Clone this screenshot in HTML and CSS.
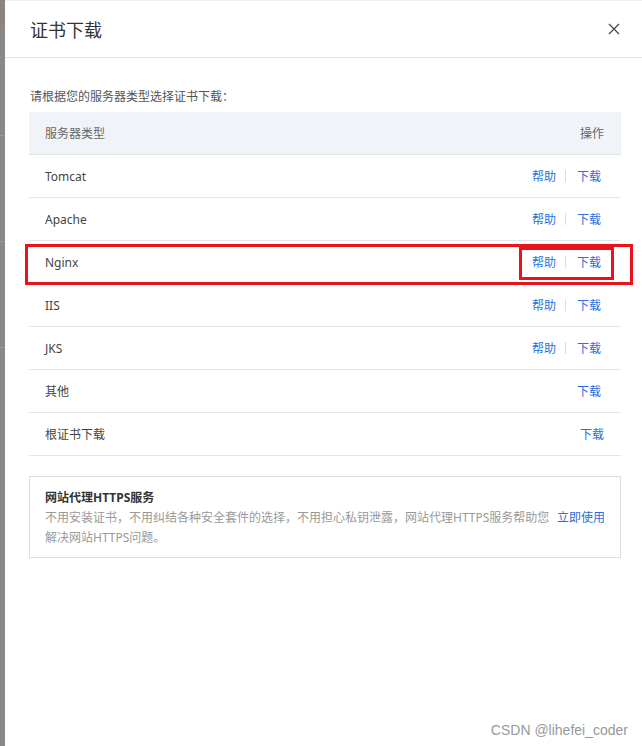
FILE: index.html
```html
<!DOCTYPE html>
<html lang="zh-CN">
<head>
  <meta charset="UTF-8" />
  <meta name="viewport" content="width=device-width, initial-scale=1.0"/>
  <title>证书下载</title>
  <link rel="stylesheet" href="styles.css">
</head>
<body>
  <div class="fundo">
    <div class="faixa topo"></div>
    <div class="faixa"></div>
    <div class="faixa"></div>
    <div class="faixa"></div>
    <div class="faixa resto"></div>
  </div>

  <div class="dialogo">
    <div class="cabecalho">
      <span class="titulo">证书下载</span>
      <span class="fechar">
        <svg width="12" height="12" viewBox="0 0 12 12"><path d="M1 1L11 11M11 1L1 11" stroke="#444" stroke-width="1.2" fill="none"/></svg>
      </span>
    </div>

    <div class="corpo">
      <p class="dica">请根据您的服务器类型选择证书下载：</p>

      <div class="tabela">
        <div class="linha cab">
          <span>服务器类型</span>
          <span>操作</span>
        </div>
        <div class="linha">
          <span>Tomcat</span>
          <span class="acoes"><a>帮助</a><i class="sep"></i><a>下载</a></span>
        </div>
        <div class="linha">
          <span>Apache</span>
          <span class="acoes"><a>帮助</a><i class="sep"></i><a>下载</a></span>
        </div>
        <div class="linha marcada">
          <span>Nginx</span>
          <span class="acoes caixa"><a>帮助</a><i class="sep"></i><a>下载</a></span>
        </div>
        <div class="linha">
          <span>IIS</span>
          <span class="acoes"><a>帮助</a><i class="sep"></i><a>下载</a></span>
        </div>
        <div class="linha">
          <span>JKS</span>
          <span class="acoes"><a>帮助</a><i class="sep"></i><a>下载</a></span>
        </div>
        <div class="linha">
          <span>其他</span>
          <span class="acoes"><a>下载</a></span>
        </div>
        <div class="linha">
          <span>根证书下载</span>
          <span><a>下载</a></span>
        </div>
      </div>

      <div class="servico">
        <div class="servico-titulo">网站代理HTTPS服务</div>
        <div class="servico-texto">
          <p>不用安装证书，不用纠结各种安全套件的选择，不用担心私钥泄露，网站代理HTTPS服务帮助您<br>解决网站HTTPS问题。</p>
          <a>立即使用</a>
        </div>
      </div>
    </div>

    <div class="marca">CSDN @lihefei_coder</div>
  </div>
</body>
</html>
```

FILE: styles.css
```css
body {
  margin: 0;
  display: flex;
  height: 746px;
  overflow: hidden;
  font-family: "Noto Sans", "Noto Sans CJK SC", sans-serif;
  font-size: 12px;
  color: #333;
}

.fundo {
  width: 5px;
  display: flex;
  flex-direction: column;
  background-color: #898989;
}

.faixa {
  height: 105px;
  border-bottom: 1px solid #9a9a9a;
}

.faixa.topo {
  height: 30px;
  background-color: #8b857a;
  border-bottom: none;
}

.faixa.resto {
  flex: 1;
  border-bottom: none;
}

.dialogo {
  flex: 1;
  background-color: #fff;
  position: relative;
  border-top: 1px solid #f0f0f0;
}

.cabecalho {
  height: 56px;
  display: flex;
  align-items: center;
  justify-content: space-between;
  padding: 0 22px 0 25px;
  border-bottom: 1px solid #e3e3e3;
}

.titulo {
  font-size: 18px;
  color: #333;
}

.fechar {
  display: flex;
}

.corpo {
  padding: 29px 21px 0 24px;
}

.dica {
  margin: 0 0 5px 1px;
  line-height: 20px;
  color: #555;
}

.linha {
  height: 42px;
  display: flex;
  align-items: center;
  justify-content: space-between;
  padding: 0 17px 0 16px;
  border-bottom: 1px solid #e5e5e5;
  color: #444;
}

.linha.cab {
  background-color: #f0f3f8;
  color: #666;
}

.linha a {
  color: #2a6fdb;
  cursor: pointer;
}

.acoes {
  display: flex;
  align-items: center;
  margin-right: 3px;
}

.sep {
  width: 1px;
  height: 12px;
  background-color: #ddd;
  margin: 0 11px 0 9px;
}

.marcada {
  position: relative;
}

.marcada::before {
  content: "";
  position: absolute;
  left: -4px;
  right: -12px;
  top: 3px;
  bottom: -2px;
  border: 3.5px solid #e8141c;
}

.caixa {
  position: relative;
}

.caixa::before {
  content: "";
  position: absolute;
  left: -13px;
  right: -13px;
  top: -6px;
  bottom: -9px;
  border: 3px solid #e8141c;
}

.servico {
  margin-top: 20px;
  border: 1px solid #ddd;
  padding: 11px 15px 9px 15px;
}

.servico-titulo {
  font-weight: bold;
  color: #333;
  line-height: 20px;
}

.servico-texto {
  display: flex;
  justify-content: space-between;
  align-items: flex-start;
}

.servico-texto p {
  margin: 0;
  line-height: 20px;
  color: #999;
}

.servico-texto a {
  color: #2a6fdb;
  line-height: 20px;
  white-space: nowrap;
  cursor: pointer;
}

.marca {
  position: absolute;
  right: 14px;
  bottom: 8px;
  font-family: "Liberation Sans", sans-serif;
  font-size: 14px;
  color: #999;
}
```
